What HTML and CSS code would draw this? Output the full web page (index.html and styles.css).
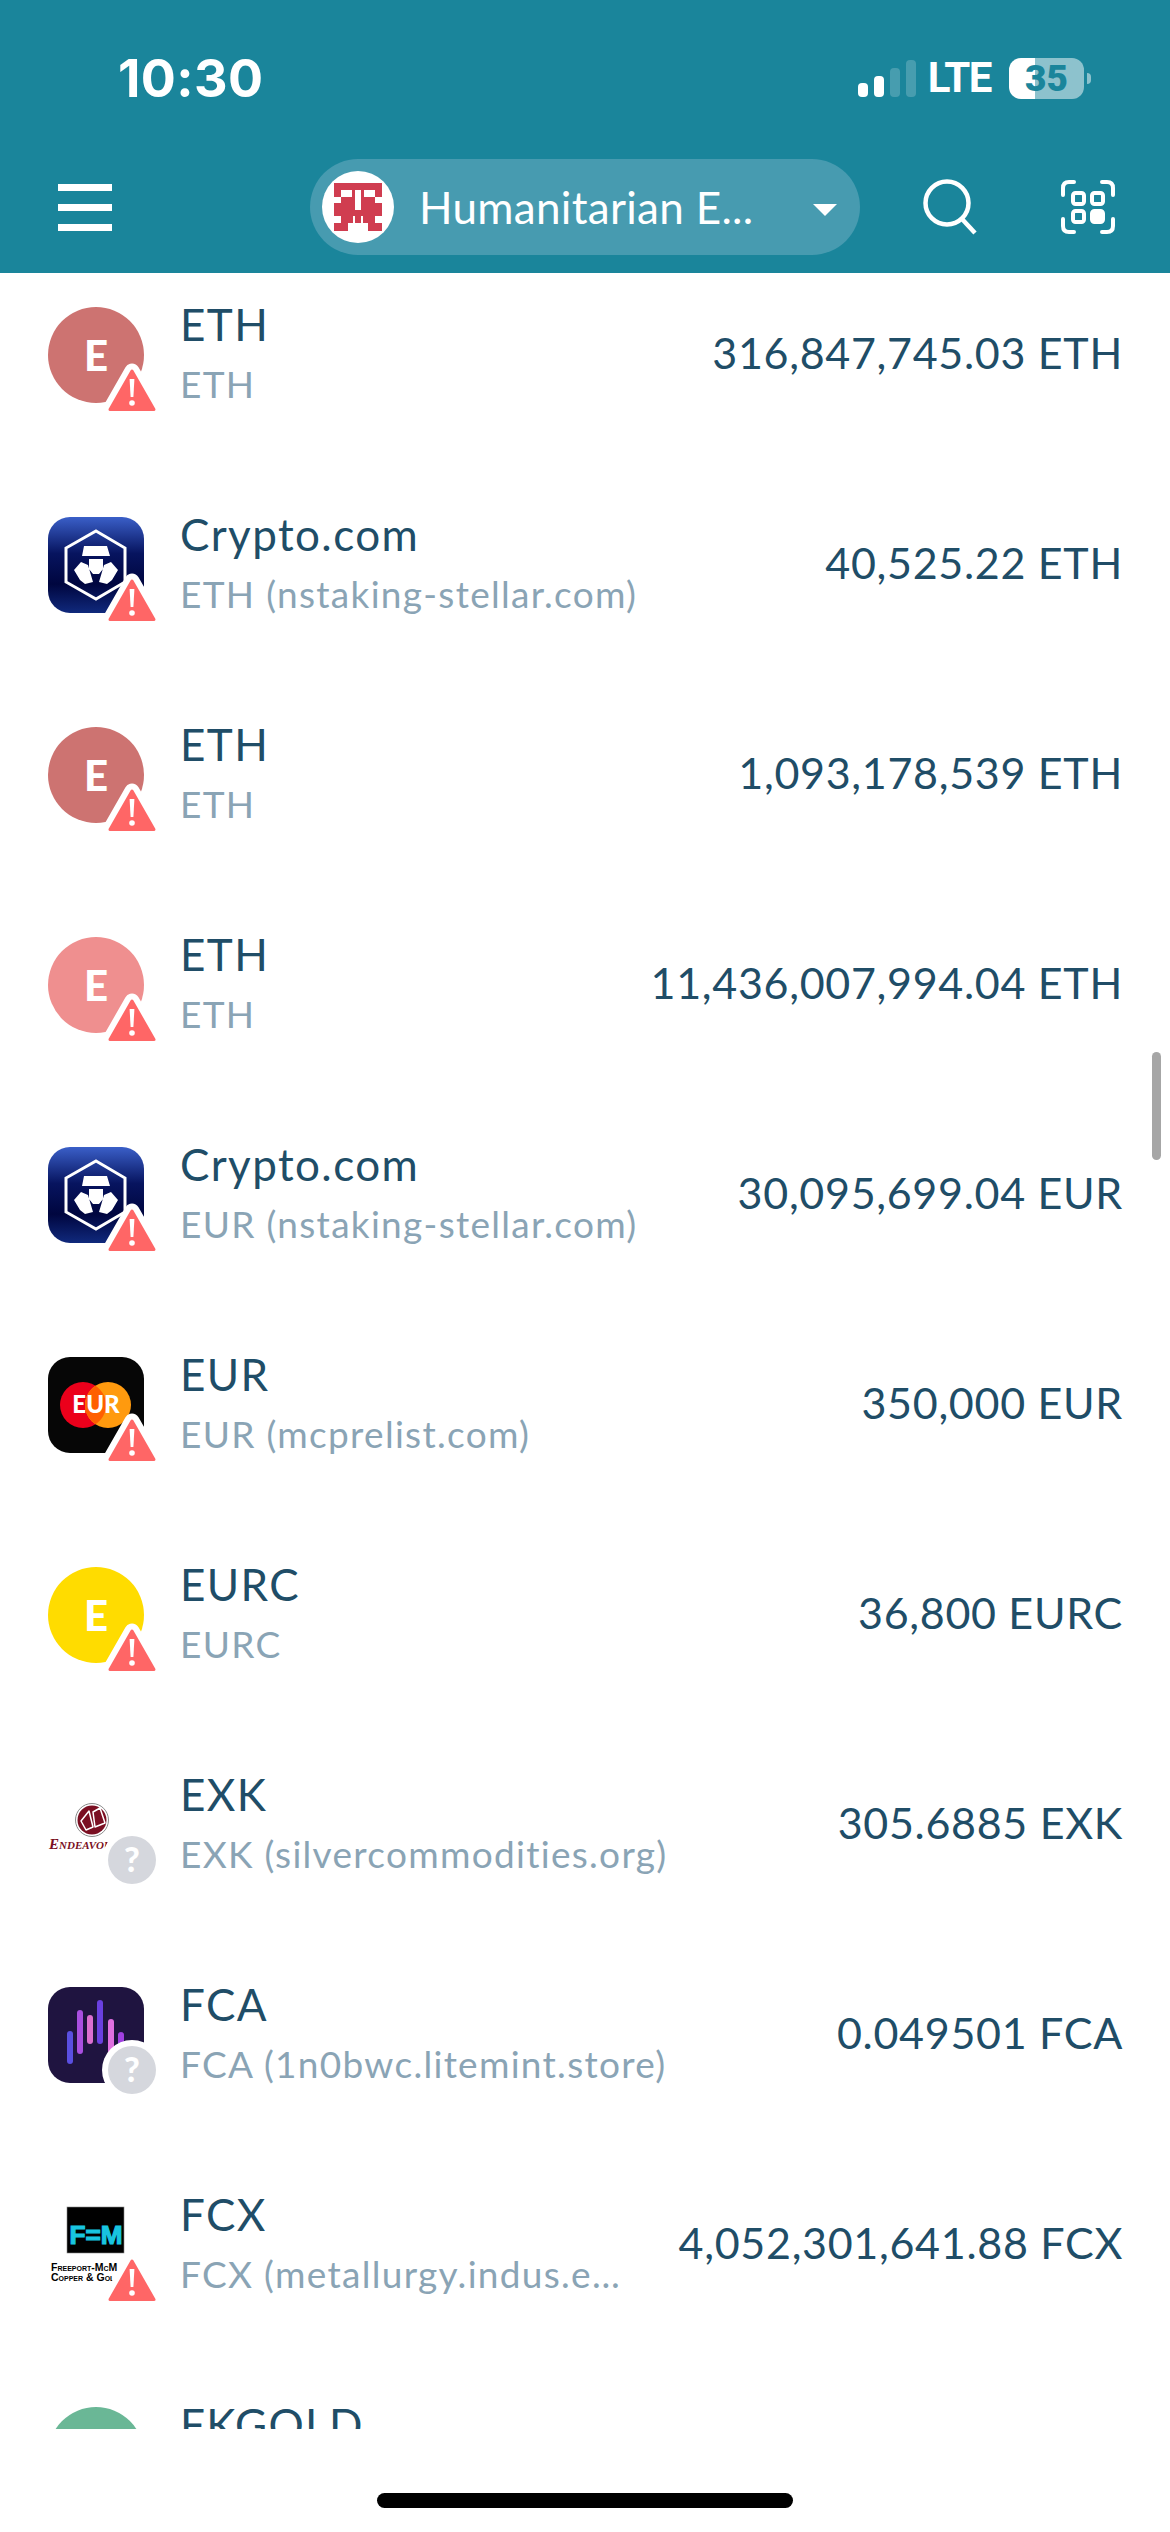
FILE: index.html
```html
<!DOCTYPE html>
<html lang="en">
<head>
  <meta charset="UTF-8">
  <meta name="viewport" content="width=device-width, initial-scale=1">
  <title>Wallet assets</title>
  <link rel="stylesheet" href="styles.css">
</head>
<body>
  <svg class="sprite" width="0" height="0">
    <symbol id="warn" viewBox="0 0 60 56">
      <path d="M30 9 L52 47.5 H8 Z" fill="#fff" stroke="#fff" stroke-width="15" stroke-linejoin="round"/>
      <path d="M30 9 L52 47.5 H8 Z" fill="#ff6666" stroke="#ff6666" stroke-width="3" stroke-linejoin="round"/>
      <path d="M27.600 17 H32.400 L31.400 35 H28.600 Z" fill="#fff"/>
      <circle cx="30" cy="41" r="2.800" fill="#fff"/>
    </symbol>
    <symbol id="cro" viewBox="0 0 96 96">
      <path d="M48 14 L77 31 V65 L48 82 L18 65 V31 Z" fill="none" stroke="#fff" stroke-width="3"/>
      <path d="M36 29 H59 L62 39 H34 Z M41 42 H55 V52 L51 57 H45 L41 52 Z M26 53 L33 45 L40 48 L45 65 L37 67 L32 63 Z M70 53 L63 45 L56 48 L51 65 L59 67 L64 63 Z" fill="#fff"/>
    </symbol>
  </svg>

  <div class="phone">
    <!-- Top teal header -->
    <header class="header">
      <div class="status">
        <span class="time">10:30</span>
        <div class="status-right">
          <svg class="signal" width="58" height="37" viewBox="0 0 58 37">
            <rect x="0" y="23" width="10" height="14" rx="4" fill="#fff"/>
            <rect x="16" y="16" width="10" height="21" rx="4" fill="#fff"/>
            <rect x="32" y="8" width="10" height="29" rx="4" fill="#fff" opacity=".2"/>
            <rect x="48" y="0" width="10" height="37" rx="4" fill="#fff" opacity=".2"/>
          </svg>
          <span class="lte">LTE</span>
          <div class="battery"><span>35</span></div>
          <div class="battery-nub"></div>
        </div>
      </div>
      <nav class="nav">
        <div class="menu"><i></i><i></i><i></i></div>
        <div class="picker">
          <div class="picker-logo">
            <svg width="48" height="48" viewBox="0 0 48 48" fill="#d03d50">
              <path d="M0 0H48V7H0Z M0 7H7V14H0Z M18 7H21V14H18Z M27 7H30V14H27Z M41 7H48V14H41Z M7 14H21V20H7Z M27 14H41V20H27Z M0 20H21V27H27V20H48V33H0Z M7 33H19V40H7Z M21 33H27V40H21Z M29 33H41V40H29Z M0 40H14V48H0Z M34 40H48V48H34Z"/>
            </svg>
          </div>
          <span class="picker-name">Humanitarian E...</span>
          <div class="caret"></div>
        </div>
        <svg class="search" width="54" height="56" viewBox="0 0 54 56">
          <circle cx="24" cy="24" r="21.500" fill="none" stroke="#fff" stroke-width="4.500"/>
          <path d="M39 40 L52 54" fill="none" stroke="#fff" stroke-width="4.500"/>
        </svg>
        <svg class="scan" width="54" height="54" viewBox="0 0 54 54" fill="none" stroke="#fff" stroke-width="4" stroke-linecap="round">
          <path d="M2 15 V8 Q2 2 8 2 H13 M41 2 H46 Q52 2 52 8 V15 M52 39 V46 Q52 52 46 52 H41 M13 52 H8 Q2 52 2 46 V39"/>
          <rect x="12" y="13" width="11" height="11" rx="2.500"/>
          <rect x="31" y="13" width="11" height="11" rx="2.500"/>
          <rect x="12" y="31" width="11" height="11" rx="2.500"/>
          <rect x="31" y="31" width="11" height="11" rx="2.500" fill="#fff"/>
        </svg>
      </nav>
    </header>

    <!-- Asset rows, scrolled so the first one sits under the header -->
    <main class="list">
      <div class="row">
        <div class="icon">
          <div class="letter rose">E</div>
          <svg class="badge"><use href="#warn"/></svg>
        </div>
        <div class="names"><div class="name">ETH</div><div class="sub">ETH</div></div>
        <div class="amount">316,847,745.03 ETH</div>
      </div>
      <div class="row">
        <div class="icon">
          <div class="logo cro"><svg width="96" height="96"><use href="#cro"/></svg></div>
          <svg class="badge"><use href="#warn"/></svg>
        </div>
        <div class="names"><div class="name">Crypto.com</div><div class="sub">ETH (nstaking-stellar.com)</div></div>
        <div class="amount">40,525.22 ETH</div>
      </div>
      <div class="row">
        <div class="icon">
          <div class="letter rose">E</div>
          <svg class="badge"><use href="#warn"/></svg>
        </div>
        <div class="names"><div class="name">ETH</div><div class="sub">ETH</div></div>
        <div class="amount">1,093,178,539 ETH</div>
      </div>
      <div class="row">
        <div class="icon">
          <div class="letter pink">E</div>
          <svg class="badge"><use href="#warn"/></svg>
        </div>
        <div class="names"><div class="name">ETH</div><div class="sub">ETH</div></div>
        <div class="amount">11,436,007,994.04 ETH</div>
      </div>
      <div class="row">
        <div class="icon">
          <div class="logo cro"><svg width="96" height="96"><use href="#cro"/></svg></div>
          <svg class="badge"><use href="#warn"/></svg>
        </div>
        <div class="names"><div class="name">Crypto.com</div><div class="sub">EUR (nstaking-stellar.com)</div></div>
        <div class="amount">30,095,699.04 EUR</div>
      </div>
      <div class="row">
        <div class="icon">
          <div class="logo eur">
            <svg width="96" height="96" viewBox="0 0 96 96">
              <circle cx="35" cy="48" r="23" fill="#eb001b"/>
              <circle cx="60" cy="48" r="23" fill="#ff9a0e"/>
              <path d="M47.500 28.700 A23 23 0 0 1 47.500 67.300 A23 23 0 0 1 47.500 28.700 Z" fill="#ff5f00"/>
              <text x="48" y="56" class="eur-text">EUR</text>
            </svg>
          </div>
          <svg class="badge"><use href="#warn"/></svg>
        </div>
        <div class="names"><div class="name">EUR</div><div class="sub">EUR (mcprelist.com)</div></div>
        <div class="amount">350,000 EUR</div>
      </div>
      <div class="row">
        <div class="icon">
          <div class="letter yellow">E</div>
          <svg class="badge"><use href="#warn"/></svg>
        </div>
        <div class="names"><div class="name">EURC</div><div class="sub">EURC</div></div>
        <div class="amount">36,800 EURC</div>
      </div>
      <div class="row">
        <div class="icon">
          <div class="logo">
            <svg width="96" height="96" viewBox="0 0 96 96">
              <circle cx="44" cy="43" r="16.500" fill="none" stroke="#8a8a8a" stroke-width="1"/>
              <circle cx="44" cy="43" r="14.500" fill="#7a0f22"/>
              <path d="M33 44 L41 34 L45 50 L38 53 Z M45 35 L52 31 L57 46 L47 50 Z" fill="#7a0f22" stroke="#fff" stroke-width="1.500" stroke-linejoin="round"/>
              <text x="1" y="72" class="endeavour">Endeavour</text>
            </svg>
          </div>
          <svg class="badge"><circle cx="30" cy="30" r="30" fill="#fff"/><circle cx="30" cy="30" r="24" fill="#d5d7dd"/><text x="30" y="42" class="qmark">?</text></svg>
        </div>
        <div class="names"><div class="name">EXK</div><div class="sub">EXK (silvercommodities.org)</div></div>
        <div class="amount">305.6885 EXK</div>
      </div>
      <div class="row">
        <div class="icon">
          <div class="logo fca">
            <svg width="96" height="96" viewBox="0 0 96 96" stroke-width="6" stroke-linecap="round">
              <path d="M22 47 V74" stroke="#5a4fe0"/>
              <path d="M32 26 V64" stroke="#a94fe0"/>
              <path d="M42 31 V54" stroke="#dc6fd0"/>
              <path d="M52 16 V54" stroke="#6a40e0"/>
              <path d="M63 35 V64" stroke="#e070e0"/>
              <path d="M73 48 V66" stroke="#a040e0"/>
            </svg>
          </div>
          <svg class="badge"><circle cx="30" cy="30" r="30" fill="#fff"/><circle cx="30" cy="30" r="24" fill="#d5d7dd"/><text x="30" y="42" class="qmark">?</text></svg>
        </div>
        <div class="names"><div class="name">FCA</div><div class="sub">FCA (1n0bwc.litemint.store)</div></div>
        <div class="amount">0.049501 FCA</div>
      </div>
      <div class="row">
        <div class="icon">
          <div class="logo">
            <svg width="96" height="96" viewBox="0 0 96 96">
              <rect x="19" y="10" width="57" height="46" fill="#000" stroke="#888" stroke-width=".6"/>
              <text x="48" y="47" class="fcx-mark" textLength="53" lengthAdjust="spacingAndGlyphs">F=M</text>
              <text x="3" y="74" class="fcx-small">Freeport-McM</text>
              <text x="3" y="84" class="fcx-small">Copper &amp; Gol</text>
            </svg>
          </div>
          <svg class="badge"><use href="#warn"/></svg>
        </div>
        <div class="names"><div class="name">FCX</div><div class="sub">FCX (metallurgy.indus.e…</div></div>
        <div class="amount">4,052,301,641.88 FCX</div>
      </div>
      <div class="row">
        <div class="icon">
          <div class="letter green"></div>
        </div>
        <div class="names cut"><div class="name">FKGOLD</div></div>
      </div>
    </main>

    <div class="home"><div class="home-bar"></div></div>
    <div class="scrollbar"></div>
  </div>
</body>
</html>
```

FILE: styles.css
```css
body {
  margin: 0;
  background: #fff;
  font-family: Lato, "Open Sans", sans-serif;
}
.sprite {
  position: absolute;
}
.phone {
  position: relative;
  width: 1170px;
  height: 2532px;
  display: flex;
  flex-direction: column;
  overflow: hidden;
}

/* Header */
.header {
  height: 273px;
  flex: none;
  background: #1a859b;
  color: #fff;
}
.status {
  height: 159px;
  padding: 0 79px 3px 118px;
  box-sizing: border-box;
  display: flex;
  align-items: center;
  justify-content: space-between;
}
.time {
  font-family: Inter, sans-serif;
  font-weight: 700;
  font-size: 52px;
  letter-spacing: 0.4px;
}
.status-right {
  display: flex;
  align-items: center;
}
.lte {
  margin-left: 12px;
  font-family: Roboto, sans-serif;
  font-weight: 700;
  font-size: 42px;
  line-height: 42px;
  letter-spacing: -1.5px;
}
.battery {
  margin-left: 18px;
  width: 75px;
  height: 41px;
  border-radius: 12px;
  background: linear-gradient(to right, #fff 35%, rgba(255, 255, 255, 0.5) 35%);
  display: flex;
  align-items: center;
  justify-content: center;
  color: #1a859b;
  font-family: Roboto, sans-serif;
  font-weight: 900;
  font-size: 37px;
}
.battery-nub {
  margin-left: 3px;
  width: 4px;
  height: 11px;
  border-radius: 0 4px 4px 0;
  background: rgba(255, 255, 255, 0.5);
}
.nav {
  height: 96px;
  padding-left: 58px;
  display: flex;
  align-items: center;
}
.menu {
  width: 54px;
  height: 47px;
  display: flex;
  flex-direction: column;
  justify-content: space-between;
}
.menu i {
  height: 7px;
  background: #fff;
}
.picker {
  margin-left: 198px;
  width: 550px;
  height: 96px;
  border-radius: 48px;
  background: #479bb0;
  display: flex;
  align-items: center;
  padding-left: 12px;
  box-sizing: border-box;
}
.picker-logo {
  width: 72px;
  height: 72px;
  border-radius: 50%;
  background: #fff;
  display: flex;
  align-items: center;
  justify-content: center;
}
.picker-name {
  margin-left: 25px;
  font-size: 44px;
  letter-spacing: 0.3px;
  white-space: nowrap;
}
.caret {
  position: absolute;
  left: 813px;
  top: 204px;
  border-left: 12px solid transparent;
  border-right: 12px solid transparent;
  border-top: 12px solid #fff;
}
.search {
  margin-left: 63px;
}
.scan {
  margin-left: 84px;
}

/* Asset list */
.list {
  flex: 1;
  min-height: 0;
  overflow: hidden;
}
.row {
  height: 210px;
  padding: 0 47px 0 48px;
  display: flex;
  align-items: center;
}
.row:first-child {
  margin-top: -23px;
}
.icon {
  position: relative;
  width: 96px;
  height: 96px;
  flex: none;
}
.letter {
  width: 96px;
  height: 96px;
  border-radius: 50%;
  display: flex;
  align-items: center;
  justify-content: center;
  color: #fff;
  font-weight: 900;
  font-size: 42px;
}
.rose {
  background: #cd7371;
}
.pink {
  background: #ef8f8f;
}
.yellow {
  background: #ffdc00;
}
.green {
  background: #6ab796;
}
.logo {
  width: 96px;
  height: 96px;
  border-radius: 22px;
  overflow: hidden;
}
.cro {
  background: linear-gradient(#3a5fc8, #07145f 38%, #00063f 70%, #10297c);
}
.eur {
  background: #060606;
}
.fca {
  background: #1f1440;
}
.badge {
  position: absolute;
  left: 54px;
  top: 53px;
  width: 60px;
  height: 60px;
}
.eur-text {
  fill: #fff;
  font-family: Lato, sans-serif;
  font-weight: 900;
  font-size: 24px;
  text-anchor: middle;
}
.qmark {
  fill: #fff;
  font-family: Lato, sans-serif;
  font-weight: 900;
  font-size: 34px;
  text-anchor: middle;
}
.endeavour {
  fill: #7a0f22;
  font-family: "Liberation Serif", serif;
  font-style: italic;
  font-weight: 700;
  font-variant: small-caps;
  font-size: 15px;
}
.fcx-mark {
  fill: #18c5e0;
  stroke: #18c5e0;
  stroke-width: 1.2px;
  font-family: "Liberation Sans", sans-serif;
  font-weight: 700;
  font-size: 26px;
  text-anchor: middle;
}
.fcx-small {
  fill: #000;
  font-family: "Liberation Sans", sans-serif;
  font-weight: 700;
  font-variant: small-caps;
  font-size: 10.500px;
}
.names {
  width: 460px;
  margin-left: 36px;
  flex: none;
}
.names.cut {
  padding-bottom: 62px;
}
.name {
  font-size: 44px;
  line-height: 56px;
  letter-spacing: 1.4px;
  color: #204d67;
  white-space: nowrap;
}
.sub {
  margin-top: 2px;
  font-size: 37px;
  line-height: 60px;
  letter-spacing: 1.3px;
  color: #8aa4b5;
  white-space: nowrap;
}
.amount {
  margin-left: auto;
  padding-bottom: 6px;
  font-size: 43px;
  letter-spacing: 0.7px;
  color: #204d67;
  white-space: nowrap;
}

/* Bottom area */
.home {
  height: 103px;
  flex: none;
  background: #fff;
  padding-top: 64px;
  box-sizing: border-box;
}
.home-bar {
  width: 416px;
  height: 15px;
  margin: 0 auto;
  border-radius: 8px;
  background: #000;
}
.scrollbar {
  position: absolute;
  left: 1152px;
  top: 1052px;
  width: 9px;
  height: 108px;
  border-radius: 5px;
  background: #a6a6a6;
}
```
